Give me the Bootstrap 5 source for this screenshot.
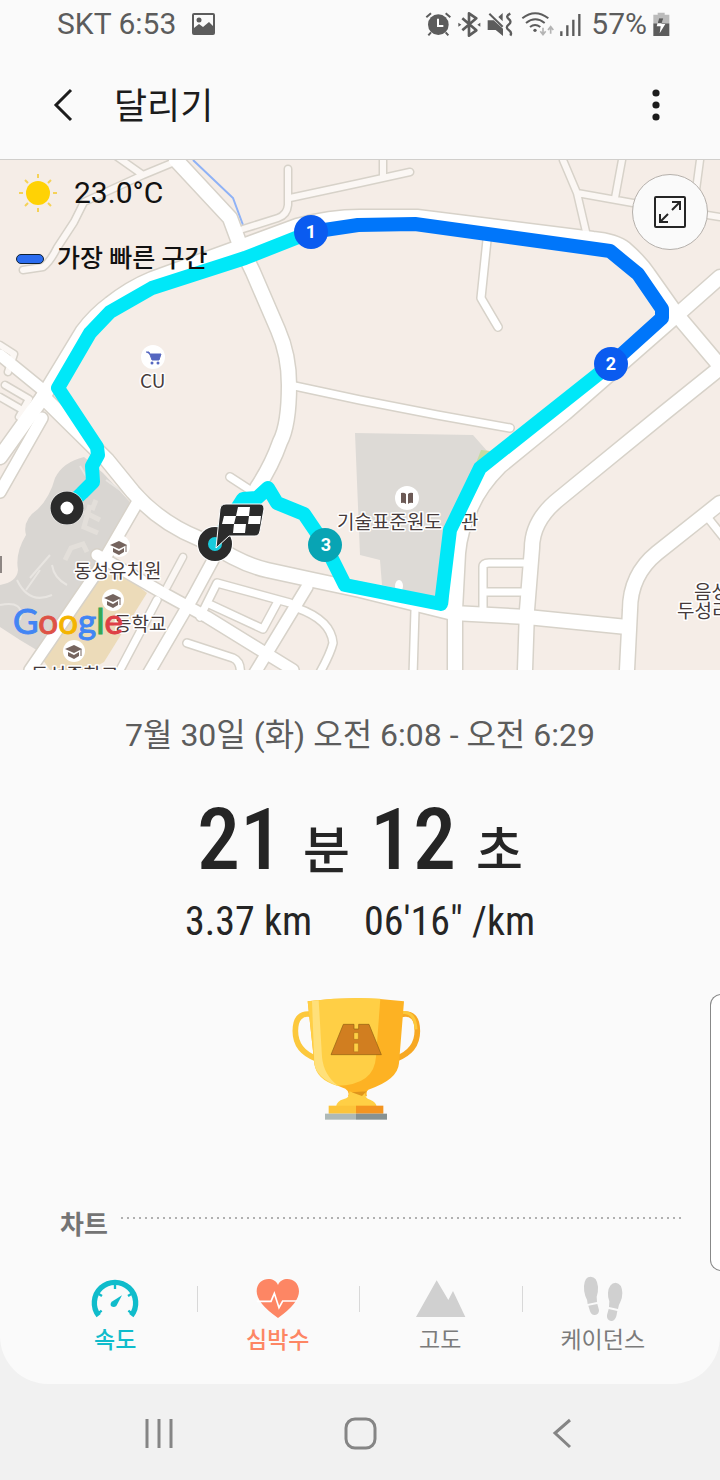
<!DOCTYPE html>
<html lang="ko">
<head>
<meta charset="utf-8">
<meta name="viewport" content="width=device-width, initial-scale=1">
<title>달리기</title>
<link href="https://cdn.jsdelivr.net/npm/bootstrap@5.3.0/dist/css/bootstrap.min.css" rel="stylesheet">
<style>
  body { font-family: Roboto, "Noto Sans CJK KR", sans-serif; background: #f1f1f1; color: #252525; }
  svg { display: block; overflow: visible; flex: none; }
  button { border: 0; background: none; padding: 0; color: inherit; }
  .screen { background: #fafafa; border-radius: 0 0 48px 48px; }
  .status { height: 48px; padding: 0 50px 0 57px; font-size: 30px; line-height: 48px; color: #5c5c5c; }
  .status-icons { gap: 5px; }
  .title-bar { height: 112px; padding: 2px 46px 0; border-bottom: 1px solid #d0cecb; }
  .title-bar h1 { font-size: 36px; line-height: 52px; padding-top: 4px; color: #1c1c1c; margin-left: 32px; }
  .map-box { height: 510px; overflow: hidden; background: #f5ede7; }
  .map-box > svg { width: 100%; height: 100%; }
  .map-info { top: 0; left: 16px; color: #111; }
  .weather { height: 64px; font-size: 30px; gap: 16px; }
  .legend { height: 70px; font-size: 25px; gap: 13px; }
  .legend-bar { width: 28px; height: 10px; border: 1px solid #123; border-radius: 5px; background: #2b6cf0; }
  .expand { top: 14px; right: 12px; width: 76px; height: 76px; border: 1px solid #b5b0ab; border-radius: 50%; background: #fafafa; }
  .poi { font: 19px "Noto Sans CJK KR", sans-serif; fill: #453a3a; stroke: #fff; stroke-width: 3px; paint-order: stroke; stroke-linejoin: round; }
  .pin { font: 700 18px Roboto, sans-serif; fill: #fff; text-anchor: middle; }
  .brand { font: 35px Lato, sans-serif; stroke-width: 1px; }
  .when { margin-top: 40px; font-size: 32px; line-height: 50px; color: #5c5c5c; }
  .duration { margin-top: 30px; height: 100px; font-family: "Roboto Condensed", Roboto, "Noto Sans CJK KR", sans-serif; font-size: 86px; line-height: 100px; font-weight: 500; gap: 20px; }
  .duration small { font-size: 51px; }
  .figures { margin-top: 4px; font-family: "Roboto Condensed", Roboto, sans-serif; font-size: 40px; line-height: 56px; gap: 52px; }
  .trophy { margin-top: 46px; }
  .chart-head { margin-top: 78px; padding: 0 36px 0 60px; gap: 13px; }
  .chart-head h2 { font-size: 26px; line-height: 46px; padding-top: 2px; font-weight: 700; color: #747474; }
  .dots { height: 2px; margin-bottom: 13px; background: repeating-linear-gradient(90deg, #b0b0b0 0 2px, transparent 2px 6px); }
  .tabs { padding: 28px 36px 24px 34px; }
  .tabs button { font-size: 23px; line-height: 34px; color: #7b7b7b; height: 84px; }
  .tabs button + button::before { content: ""; position: absolute; left: 0; top: 10px; width: 1px; height: 26px; background: #d8d8d8; }
  .tabs .speed { color: #10bccb; font-weight: 500; }
  .tabs .heart { color: #fd8664; font-weight: 500; }
  .edge-handle { right: -1px; top: 994px; width: 11px; height: 277px; background: #fff; border: 1px solid #888; border-right: 0; border-radius: 12px 0 0 12px; }
  .system-nav { height: 96px; padding: 2px 57px 0 59px; }
  .system-nav button { height: 94px; }
</style>
</head>
<body>
<div class="screen position-relative">
  <header>
    <div class="status d-flex align-items-center justify-content-between">
      <div class="d-flex align-items-center gap-3">
        <span>SKT 6:53</span>
        <svg width="24" height="23" viewBox="0 0 24 23"><rect x="1" y="1" width="21" height="20" rx="1" fill="none" stroke="#5c5c5c" stroke-width="2"/><circle cx="7" cy="7" r="2.500" fill="#5c5c5c"/><path d="M2 15l5-4 4 3 6-5 5 5v7H2z" fill="#5c5c5c"/></svg>
      </div>
      <div class="status-icons d-flex align-items-center">
        <svg width="27" height="26" viewBox="78 30 81 78"><circle cx="118" cy="71" r="31" fill="#5c5c5c"/><path d="M82 49l14-12M154 49l-14-12M96 94l-8 9M140 94l8 9" stroke="#5c5c5c" stroke-width="6"/><path d="M117 53v22h16" fill="none" stroke="#fff" stroke-width="6"/></svg>
        <svg width="25" height="26" viewBox="174 30 75 78"><path d="M190 52l42 36-22 16V37l22 15-42 36" fill="none" stroke="#5c5c5c" stroke-width="8" stroke-linejoin="round"/><path d="M178 65l9 6-9 6zM244 65l-9 6 9 6z" fill="#5c5c5c"/></svg>
        <svg width="27" height="26" viewBox="264 30 81 78"><path d="M266 58h18l28 25v22l-22-18h-24zM311 36v25l-13-13z" fill="#5c5c5c"/><path d="M271 38l40 39" stroke="#5c5c5c" stroke-width="6"/><path d="M334 38q-16 8-5 16t0 17 0 16 5 17" fill="none" stroke="#5c5c5c" stroke-width="7"/></svg>
        <svg width="35" height="26" viewBox="360 30 105 78"><g fill="none" stroke="#5c5c5c" stroke-width="6"><path d="M370 52q38-31 78 0M381 66q28-22 56 0M393 78q15-12 31 0"/></g><circle cx="408" cy="88" r="5" fill="#5c5c5c"/><path d="M432 80v20m-8-9l8 10 8-10M455 98V78m-8 9l8-10 8 10" fill="none" stroke="#b4b4b4" stroke-width="5"/></svg>
        <svg width="27" height="26" viewBox="480 30 81 78"><path d="M487 91v14M505 73v32M523 56v49M541 39v66" stroke="#5c5c5c" stroke-width="7"/></svg>
        <span>57%</span>
        <svg width="18" height="26" viewBox="756 30 54 78"><path d="M773 35h21v6h14v26h-48V41h13z" fill="#bbb"/><path d="M760 67h48v38h-48z" fill="#5c5c5c"/><path d="M777 52h13l-6 17h12l-17 28 3-21h-12z" fill="#fff"/><path d="M777 52h13l-5 15h-12z" fill="#5c5c5c"/></svg>
      </div>
    </div>
    <div class="title-bar d-flex align-items-center">
      <button aria-label="뒤로"><svg width="36" height="40" viewBox="0 0 36 40"><path d="M25 5L10 20l15 15" fill="none" stroke="#1c1c1c" stroke-width="3"/></svg></button>
      <h1 class="mb-0 fw-normal flex-grow-1">달리기</h1>
      <button aria-label="더보기"><svg width="36" height="40" viewBox="0 0 36 40" fill="#1c1c1c"><circle cx="18" cy="8" r="3.600"/><circle cx="18" cy="20" r="3.600"/><circle cx="18" cy="32" r="3.600"/></svg></button>
    </div>
  </header>

  <section class="map-box position-relative" aria-label="지도">
    <svg viewBox="0 160 720 510" preserveAspectRatio="xMidYMid slice">
      <defs>
        <g id="wide">
          <path d="M176 160L230 218L240 245L253 272L278 330Q289 355 289 385Q289 425 280 442Q272 465 257 488"/>
          <path d="M0 457L43 397L83 331Q95 315 110 304Q130 288 152 279L240 247L297 226Q330 217 360 217H417L593 239Q615 241 625 249Q640 262 648 274L677 315L720 277M677 315L720 366"/>
          <path d="M677 315L565 413L500 466Q480 486 471 507Q460 530 458 553L455 610V670"/>
          <path d="M43 397L107 460L133 492Q160 523 200 539L233 557Q250 566 267 570L313 580L360 590L453 613L527 617L627 627"/>
          <path d="M720 368L664 413L560 498Q532 520 532 548L527 610L525 670"/>
          <path d="M720 503L657 553Q630 575 630 610L627 670"/>
        </g>
        <g id="middle">
          <path d="M0 355L43 390M137 503L97 572L30 670M213 560L193 597L147 676M307 587L253 676M97 555L163 593L207 617L293 670"/>
          <path d="M0 492L42 418"/>
        </g>
        <g id="small-road">
          <path d="M290 385L360 400L437 415L510 428M487 240L481 298Q485 305 498 327"/>
          <path d="M200 617L217 583L290 603M207 603L263 629L277 603M187 643L233 658Q242 662 240 676M297 608Q331 620 333 643Q330 655 318 676M230 477L250 490"/>
          <path d="M483 610V567Q483 563 489 563H525M485 592H525M415 610L413 676M708 518L724 538M157 600L120 670"/>
        </g>
        <g id="lane">
          <path d="M563 160L577 193L587 236M577 193L633 203L720 217M622 160L615 198M700 160L696 190"/>
          <path d="M288 169V205Q287 215 278 218L243 229M290 198L360 183L410 172M383 150V176"/>
          <path d="M116 156L143 175L172 163M143 175L84 202L74 222L57 248Q50 262 43 267L23 270"/>
          <path d="M183 557L167 587M0 345L14 354L8 372M5 385L29 399L19 417M0 397L19 408M0 353L7 357"/>
        </g>
      </defs>
      <path d="M355 433L473 435L488 452L477 467L453 527L435 597L382 585L380 560L360 555z" fill="#dddad6"/>
      <path d="M481 450l9 1-20 28z" fill="#c5dba3"/><ellipse cx="399" cy="586" rx="4" ry="6" fill="#fff"/>
      <path d="M84 457Q63 462 55 478Q50 497 38 509Q22 520 26 535Q15 553 18 570Q17 582 0 585V627L20 640L45 655L130 502L103 473z" fill="#d9d6d2"/>
      <path d="M0 605q25-5 20 15M17 580q12 25 35 15M30 578L50 555M52 565Q54 578 67 585M80 466l9 15M106 480l21 15M40 570l-14 20" fill="none" stroke="#e8e5e1" stroke-width="2"/>
      <path d="M65 560l6-12 12-4 4 8M84 512l16 8M90 505l-6 22 14 6M96 500l-4 10" fill="none" stroke="#e3dfda" stroke-width="5"/>
      <path d="M90 577L120 572L147 593L104 662L90 670H50L43 660z" fill="#ecdbb9"/>
      <path d="M193 160L233 198L243 225" fill="none" stroke="#8fb2f6" stroke-width="2"/>
      <path d="M200 176L222 198L236 217" fill="none" stroke="#ead9cf" stroke-width="1"/>
      <g fill="none" stroke="#d7d2c9" stroke-linecap="round" stroke-linejoin="round">
        <use href="#lane" stroke-width="9"/><use href="#small-road" stroke-width="10"/><use href="#middle" stroke-width="14"/><use href="#wide" stroke-width="17"/>
      </g>
      <g fill="none" stroke="#fff" stroke-linecap="round" stroke-linejoin="round">
        <use href="#lane" stroke-width="6" stroke="#fbf7f4"/><use href="#small-road" stroke-width="7"/><use href="#middle" stroke-width="11"/><use href="#wide" stroke-width="14"/>
      </g>

      <g fill="#fff"><circle cx="153" cy="357" r="12"/><circle cx="407" cy="498" r="12"/><circle cx="119" cy="546" r="11"/><circle cx="113" cy="600" r="11"/><circle cx="74" cy="651" r="11"/></g>
      <path d="M146 352h3l3 8h7l2-6h-12" fill="#5567c0" stroke="#5567c0" stroke-width="1"/><circle cx="152" cy="363" r="1.500" fill="#5567c0"/><circle cx="158" cy="363" r="1.500" fill="#5567c0"/>
      <path d="M401 493q3-1 5 1v10q-2-2-5-1zM413 493q-3-1-5 1v10q2-2 5-1z" fill="#6c5a56"/>
      <g id="cap" fill="#75645e"><path d="M110 545l9-4 8 4-8 4zM113 548v4l6 3 5-3v-4l-5 3z"/><path d="M126 545v7" stroke="#75645e" stroke-width="1"/></g>
      <use href="#cap" x="-6" y="53"/><use href="#cap" x="-45" y="104"/>
      <path d="M1 556v17" stroke="#8d8683" stroke-width="2"/>
      <g class="poi">
        <text x="140" y="388">CU</text>
        <text x="337" y="529">기술표준원도</text>
        <text x="461" y="529">관</text>
        <text x="74" y="578">동성유치원</text>
        <text x="114" y="631">등학교</text>
        <text x="31" y="682">동성중학교</text>
        <text x="694" y="599">음성</text>
        <text x="677" y="618">두성리</text>
      </g>

      <g fill="none" stroke-width="14" stroke-linejoin="round">
        <path d="M67 507L82 493L93 482L92 466L98 455L97 447L58 388L90 333L110 312L152 288L245 258L311 232" stroke="#00e8f8"/>
        <path d="M611 364L480 468L450 530L441 604L345 585L325 545L304 514L277 503L268 488L257 498L243 499L215 543" stroke="#00e8f8"/>
        <path d="M311 232L358 225L415 224L610 251L638 274L662 309V318L611 364" stroke="#0076fa"/>
      </g>
      <circle cx="67" cy="508" r="17" fill="#fff"/><circle cx="67" cy="508" r="11.500" fill="#fff" stroke="#2b2b2b" stroke-width="10"/>
      <circle cx="215" cy="544" r="18" fill="#fff"/><circle cx="215" cy="544" r="12" fill="#18cbdc" stroke="#2b2b2b" stroke-width="10"/>
      <path d="M226 504h34q4 0 4 5l-4 22q-1 5-5 5h-26l-13 12 4-39q1-5 6-5z" fill="#2b2b2b" stroke="#fff" stroke-width="1"/>
      <path d="M238 507h12l-1 9h-13zM224 516h12l-2 8h-12zM249 516h12l-1 8h-12zM234 524h12l-1 9h-12z" fill="#fff"/>
      <circle cx="311" cy="232" r="17" fill="#0a5bf0"/><circle cx="611" cy="364" r="17" fill="#0a5bf0"/><circle cx="325" cy="545" r="17" fill="#08a4b4"/>
      <g class="pin"><text x="311" y="238">1</text><text x="611" y="370">2</text><text x="326" y="551">3</text></g>
      <text class="brand" x="13" y="634"><tspan fill="#4285f4" stroke="#4285f4">G</tspan><tspan fill="#de5246" stroke="#de5246">o</tspan><tspan fill="#f4b400" stroke="#f4b400">o</tspan><tspan fill="#4285f4" stroke="#4285f4">g</tspan><tspan fill="#34a853" stroke="#34a853">l</tspan><tspan fill="#de4046" stroke="#de4046">e</tspan></text>
    </svg>
    <div class="map-info position-absolute">
      <div class="weather d-flex align-items-center">
        <svg width="42" height="42" viewBox="0 0 42 42"><circle cx="22" cy="22" r="12" fill="#ffd205"/><path d="M22 3v4M22 37v4M3 22h4M37 22h4M9 9l3 3M32 32l3 3M35 9l-3 3M9 35l3-3" stroke="#f5d258" stroke-width="2"/></svg>
        <span>23.0°C</span>
      </div>
      <div class="legend d-flex align-items-center fw-medium"><span class="legend-bar"></span><span>가장 빠른 구간</span></div>
    </div>
    <button class="expand position-absolute d-flex align-items-center justify-content-center" aria-label="지도 확대">
      <svg width="34" height="34" viewBox="0 0 34 34" fill="none" stroke="#252525" stroke-width="2"><rect x="2" y="2" width="30" height="30" rx="1"/><path d="M19 15l8-8M19 7h8v8M15 19l-8 8M7 19v8h8"/></svg>
    </button>
  </section>

  <main class="d-flex flex-column">
    <p class="when mb-0 text-center">7월 30일 (화) 오전 6:08 - 오전 6:29</p>
    <div class="duration d-flex justify-content-center align-items-baseline"><span>21</span><small>분</small><span>12</span><small>초</small></div>
    <div class="figures d-flex justify-content-center"><span>3.37 km</span><span>06'16" /km</span></div>
    <svg class="trophy align-self-center" width="132" height="126" viewBox="72 48 396 378">
      <path d="M125 103q-49-8-49 50 0 60 65 84" fill="none" stroke="#fcc83c" stroke-width="17"/>
      <path d="M395 103q47-8 47 50 0 60-65 84" fill="none" stroke="#f7a823" stroke-width="17"/>
      <path d="M395 98q40-5 43 50" fill="none" stroke="#fcc83c" stroke-width="9"/>
      <path d="M113 64q143-18 289 0L387 250q-4 50-92 79-8 5-4 20h-57q6-14-8-23-88-30-93-76z" fill="#fdb223"/>
      <path d="M113 64q110-14 218-8L318 230q-5 85-117 87-63-18-68-67z" fill="#ffcf45"/>
      <path d="M126 63l20-2 10 170q5 55 50 88-68-25-73-69z" fill="#ffe07a"/>
      <path d="M220 133h32v14h14v-14h31l37 91H183z" fill="#d17e20" stroke="#91600f" stroke-width="2"/><path d="M252 158h13v20h-13zM252 190h13v25h-13z" fill="#ffcf45" stroke="#91600f" stroke-width="1"/>
      <path d="M238 334q20 10 48 0-5 20 16 26 16 7 18 20H198q3-17 22-22 20-4 18-24z" fill="#ffcf45"/><path d="M245 337l45-3-14 14z" fill="#df951d"/>
      <path d="M176 377h82v24h-82z" fill="#fcc43a"/><path d="M258 377h82v24h-82z" fill="#f39420"/><path d="M165 401h93v18h-93z" fill="#aeb9b7"/><path d="M258 401h93v18h-93z" fill="#879292"/>
    </svg>
    <div class="chart-head d-flex align-items-center"><h2 class="mb-0">차트</h2><div class="dots flex-grow-1"></div></div>
    <nav class="tabs d-flex" aria-label="차트">
      <button class="speed position-relative d-flex flex-column align-items-center flex-fill w-25">
        <svg width="50" height="48" viewBox="154 258 150 144"><path d="M180 377A62 62 0 1 1 278 377" fill="none" stroke="currentColor" stroke-width="16"/><path d="M229 282v15M179 311l11 7M279 311l-11 7M176 372l13-10M282 372l-13-10" stroke="currentColor" stroke-width="7"/><path d="M250 316l-31 19q-6 8-1 14 8 5 15-1z" fill="currentColor"/></svg>
        <span>속도</span>
      </button>
      <button class="heart position-relative d-flex flex-column align-items-center flex-fill w-25">
        <svg width="50" height="48" viewBox="639 258 150 144"><path d="M714 384Q650 340 650 304C650 262 702 256 714 285C726 256 777 262 777 304Q777 340 714 384z" fill="currentColor"/><path d="M650 334h43l10-24 14 43 11-20h43" fill="none" stroke="#fff" stroke-width="5"/></svg>
        <span>심박수</span>
      </button>
      <button class="position-relative d-flex flex-column align-items-center flex-fill w-25">
        <svg width="50" height="48" viewBox="165 258 150 144"><path d="M168 381L230 271L265 330L279 303L316 381z" fill="#d0d0d0"/></svg>
        <span>고도</span>
      </button>
      <button class="position-relative d-flex flex-column align-items-center flex-fill w-25">
        <svg width="50" height="48" viewBox="654 258 150 144" fill="#d0d0d0"><path d="M692 260q19 0 22 30 1 15-4 30l1 16-28 6q-1-14-7-24-5-14-4-30 2-28 20-28zM685 347l27-5 5 18q0 13-12 15-11 1-15-11zM767 278q19 2 20 31 0 15-6 27-6 10-7 21l-27-6 1-17q-5-12-4-26 3-29 23-30zM746 357l26 6-3 16q-5 15-16 14-14-3-12-18z"/></svg>
        <span>케이던스</span>
      </button>
    </nav>
  </main>
  <div class="edge-handle position-absolute"></div>
</div>
<nav class="system-nav d-flex" aria-label="시스템">
  <button class="w-100 d-flex align-items-center justify-content-center" aria-label="최근 앱"><svg width="36" height="36" viewBox="0 0 36 36"><path d="M5 4v29M17 4v29M29 4v29" stroke="#858585" stroke-width="3"/></svg></button>
  <button class="w-100 d-flex align-items-center justify-content-center" aria-label="홈"><svg width="36" height="36" viewBox="0 0 36 36"><rect x="3" y="4" width="29" height="29" rx="9" fill="none" stroke="#858585" stroke-width="3"/></svg></button>
  <button class="w-100 d-flex align-items-center justify-content-center" aria-label="뒤로 가기"><svg width="36" height="36" viewBox="0 0 36 36"><path d="M26 5L11 18l15 14" fill="none" stroke="#858585" stroke-width="3"/></svg></button>
</nav>
<script src="https://cdn.jsdelivr.net/npm/bootstrap@5.3.0/dist/js/bootstrap.bundle.min.js"></script>
</body>
</html>
